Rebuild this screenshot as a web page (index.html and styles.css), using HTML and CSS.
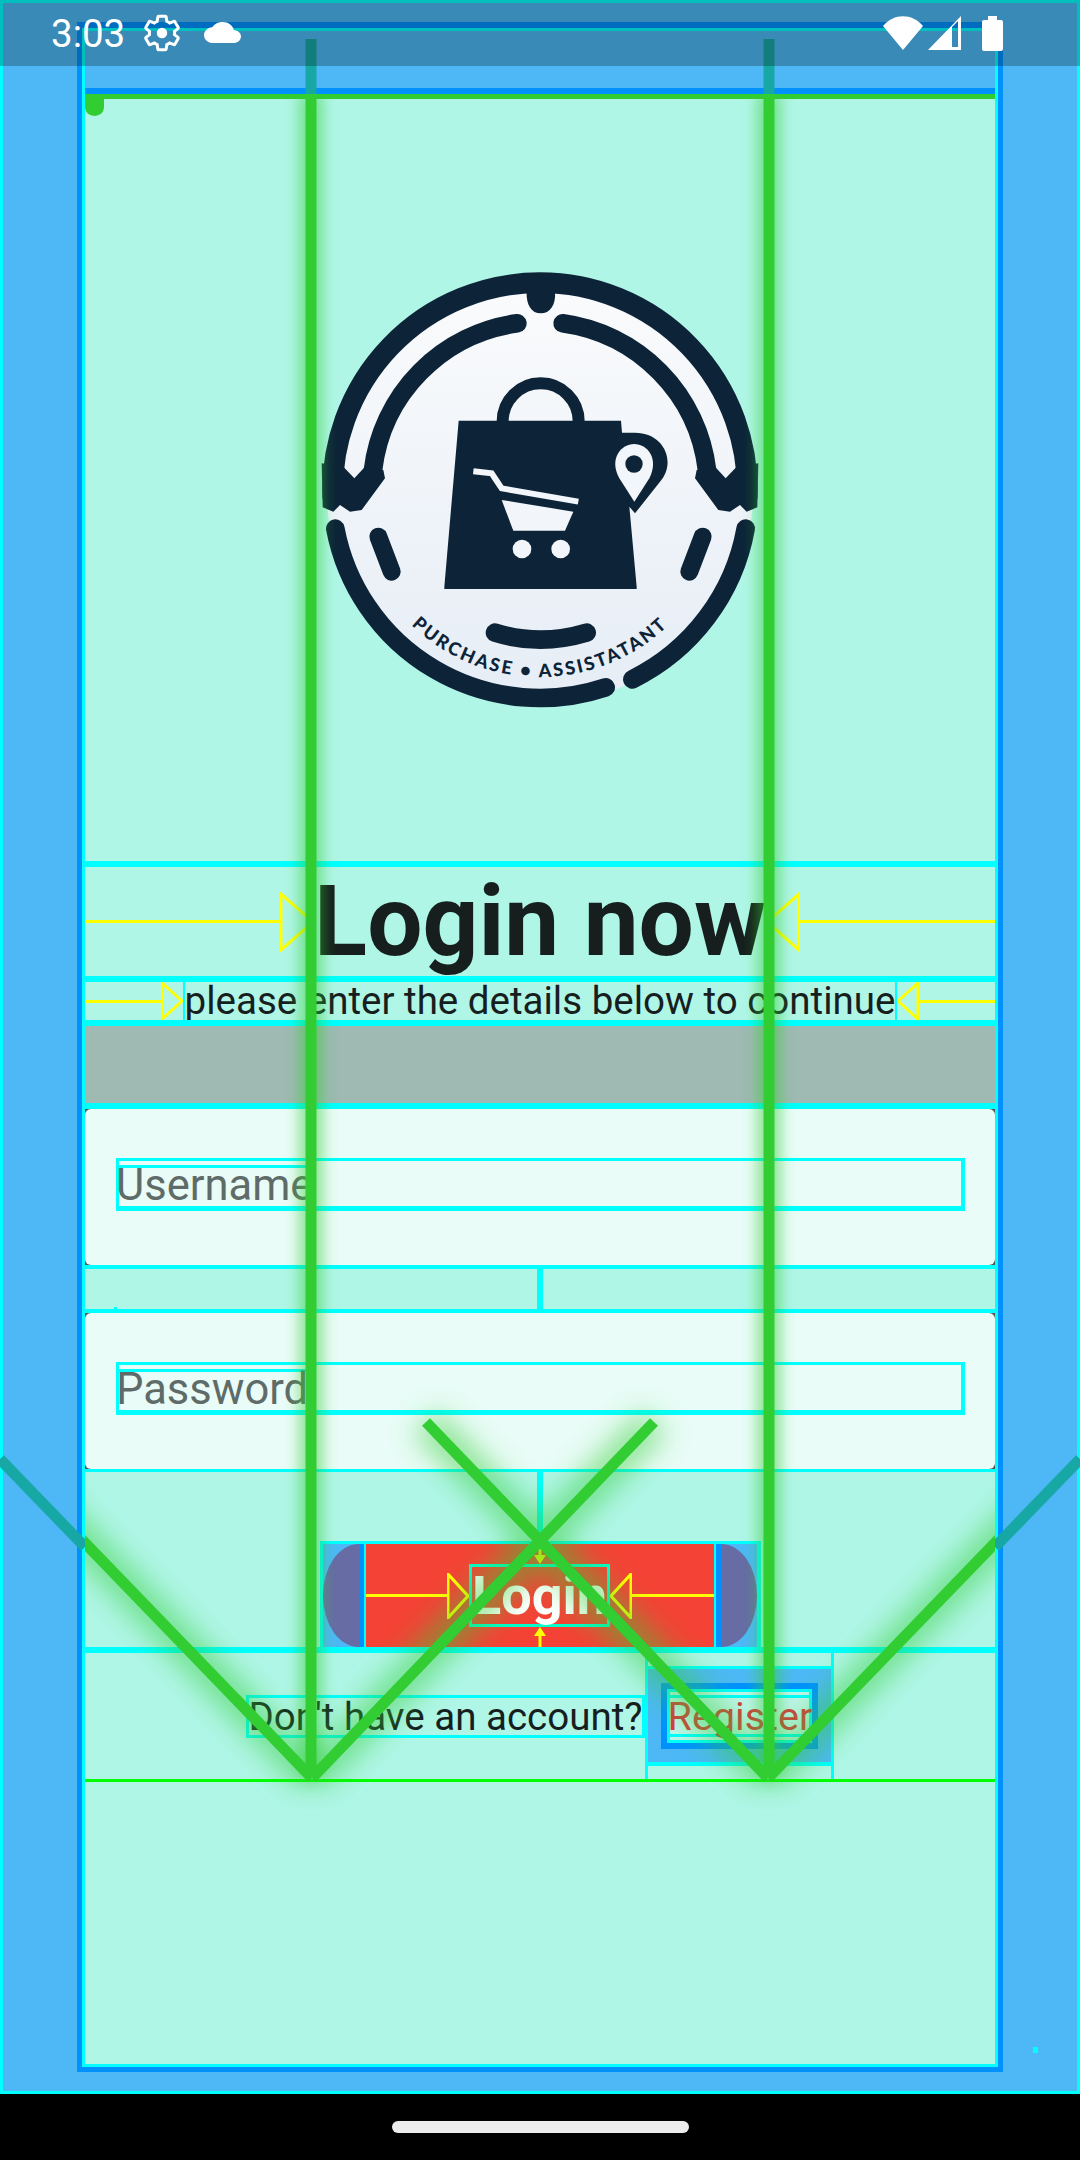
FILE: index.html
```html
<!DOCTYPE html>
<html lang="en">
<head>
    <meta charset="UTF-8">
    <meta name="viewport" content="width=device-width, initial-scale=1.0">
    <title>Login</title>
    <link rel="stylesheet" href="styles.css">
</head>
<body>
<div class="device">
    <div class="app">
        <div class="frame">
            <div class="frame_inner">
                <div class="appbar"></div>
                <div class="panel">
                    <div class="corner_dot"></div>
                    <div class="logo_box">
                        <svg class="logo" viewBox="0 0 1440 1440">
                            <defs>
                                <linearGradient id="disk" x1="0" y1="0" x2="0" y2="1">
                                    <stop offset="0" stop-color="#fafbfc"/>
                                    <stop offset="1" stop-color="#e6edf6"/>
                                </linearGradient>
                            </defs>
                            <circle cx="720" cy="720" r="640" fill="url(#disk)"/>
                            <g class="logo_stroke">
                                <path class="ring_top" d="M98.5 745 A622 622 0 1 1 1341.5 745"/>
                                <path class="arc_inner" d="M652 220 A505 505 0 0 0 219 660"/>
                                <path class="arc_inner" d="M788 220 A505 505 0 0 1 1221 660"/>
                                <path class="arc_low" d="M106 836 A625 625 0 0 0 917 1312"/>
                                <path class="arc_low" d="M997 1288 A628 628 0 0 0 1337 836"/>
                                <path class="tick" d="M235 860 L275 965"/>
                                <path class="tick" d="M1208 860 L1168 965"/>
                                <path class="smile" d="M585 1148 Q720 1190 860 1148"/>
                            </g>
                            <g class="logo_fill">
                                <path d="M680 125 H765 C768 165 750 190 722 190 C695 190 678 165 680 125 Z"/>
                                <path d="M65 640 L130 650 L163 685 L195 650 L250 660 L255 685 L185 780 L150 785 L120 765 L100 785 L68 772 Z"/>
                                <path d="M1375 640 L1310 650 L1277 685 L1245 650 L1190 660 L1185 685 L1255 780 L1290 785 L1320 765 L1340 785 L1372 772 Z"/>
                                <path d="M476 512 H963 L966 548 H1000 C1095 545 1130 640 1080 695 L1005 790 L988 770 L1010 1010 V1017 H433 V1010 Z"/>
                            </g>
                            <path class="logo_handle" d="M608 514 A114 114 0 0 1 836 514"/>
                            <path class="logo_white" d="M1003 755 L958 685 C925 625 965 582 1002 582 C1042 582 1078 625 1048 685 Z"/>
                            <circle class="logo_dark" cx="1002" cy="642" r="26"/>
                            <path class="cart_line" d="M520 664 L575 670 L605 715 L835 755"/>
                            <path class="logo_white" d="M605 750 L820 785 L795 842 H640 Z"/>
                            <circle class="logo_white" cx="666" cy="897" r="28"/>
                            <circle class="logo_white" cx="782" cy="897" r="28"/>
                            <path id="textArc" class="no_paint" d="M165 726 A555 555 0 0 0 1275 726"/>
                            <text class="logo_text"><textPath href="#textArc" startOffset="50%" text-anchor="middle">PURCHASE • ASSISTATANT</textPath></text>
                        </svg>
                    </div>

                    <div class="title_row">
                        <div class="measure"><div class="measure_line"></div><svg class="tri tri_big" viewBox="0 0 34 60"><path d="M1 2 L33 30 L1 58 Z"/></svg></div>
                        <h1 class="title">Login now</h1>
                        <div class="measure"><svg class="tri tri_big" viewBox="0 0 34 60"><path d="M33 2 L1 30 L33 58 Z"/></svg><div class="measure_line"></div></div>
                    </div>

                    <div class="sub_row">
                        <div class="measure"><div class="measure_line"></div><svg class="tri tri_small" viewBox="0 0 22 38"><path d="M1 1 L21 19 L1 37 Z"/></svg></div>
                        <div class="subtitle">please enter the details below to continue</div>
                        <div class="measure"><svg class="tri tri_small" viewBox="0 0 22 38"><path d="M21 1 L1 19 L21 37 Z"/></svg><div class="measure_line"></div></div>
                    </div>

                    <div class="band"></div>

                    <div class="field_wrap">
                        <div class="field">
                            <div class="input"><span class="placeholder">Username</span></div>
                        </div>
                    </div>
                    <div class="gap_row"><div class="gap_tick"></div></div>
                    <div class="field_wrap field_wrap_second">
                        <div class="field">
                            <div class="input"><span class="placeholder">Password</span></div>
                        </div>
                    </div>

                    <div class="button_row">
                        <div class="login_btn">
                            <div class="cap cap_left"></div>
                            <div class="login_body">
                                <svg class="v_arrow" viewBox="0 0 14 20"><path d="M7 0 V12"/><path class="head" d="M1 11 H13 L7 20 Z"/></svg>
                                <div class="login_mid">
                                    <div class="measure"><div class="measure_line"></div><svg class="tri tri_btn" viewBox="0 0 22 46"><path d="M1 1 L21 23 L1 45 Z"/></svg></div>
                                    <div class="login_text">Login</div>
                                    <div class="measure"><svg class="tri tri_btn" viewBox="0 0 22 46"><path d="M21 1 L1 23 L21 45 Z"/></svg><div class="measure_line"></div></div>
                                </div>
                                <svg class="v_arrow" viewBox="0 0 14 20"><path d="M7 8 V20"/><path class="head" d="M1 9 H13 L7 0 Z"/></svg>
                            </div>
                            <div class="cap cap_right"></div>
                        </div>
                    </div>

                    <div class="register_row">
                        <div class="account_text">Don't have an account?</div>
                        <div class="register_slot">
                            <div class="register_btn">
                                <div class="register_inner">
                                    <div class="register_pad">
                                        <div class="register_text">Register</div>
                                    </div>
                                </div>
                            </div>
                        </div>
                    </div>
                </div>
            </div>
        </div>
        <div class="tiny_tick"></div>
    </div>
    <div class="navbar"><div class="nav_pill"></div></div>

    <!-- debug lines lie over everything except the status bar -->
    <svg class="overlay" viewBox="0 0 1080 2160">
        <defs>
            <clipPath id="panelClip"><rect x="85" y="94" width="910" height="1970"/></clipPath>
            <filter id="glow" x="-20%" y="-20%" width="140%" height="140%"><feGaussianBlur stdDeviation="7"/></filter>
            <filter id="glowWide" x="-20%" y="-20%" width="140%" height="140%"><feGaussianBlur stdDeviation="14"/></filter>
        </defs>
        <g class="lines lines_out">
            <path d="M311 39 V94 M769 39 V94 M85 1547 L0 1459 M995 1547 L1080 1459"/>
        </g>
        <g clip-path="url(#panelClip)">
            <g class="lines lines_glow" filter="url(#glow)">
                <path d="M311 94 V1778 M769 94 V1778"/>
            </g>
            <g class="lines lines_glow_wide" filter="url(#glowWide)">
                <path d="M312 1778 L654 1422 M768 1778 L426 1422 M312 1778 L0 1455 M768 1778 L1080 1455"/>
            </g>
            <g class="lines">
                <path d="M311 94 V1778 M769 94 V1778 M312 1778 L654 1422 M768 1778 L426 1422 M312 1778 L0 1455 M768 1778 L1080 1455"/>
            </g>
        </g>
    </svg>

    <div class="statusbar">
        <span class="time">3:03</span>
        <svg class="gear" viewBox="0 0 24 24">
            <path class="gear_outline" d="M19.14 12.94c.04-.3.06-.61.06-.94 0-.32-.02-.64-.07-.94l2.03-1.58c.18-.14.23-.41.12-.61l-1.92-3.32c-.12-.22-.37-.29-.59-.22l-2.39.96c-.5-.38-1.03-.7-1.62-.94l-.36-2.54c-.04-.24-.24-.41-.48-.41h-3.84c-.24 0-.43.17-.47.41l-.36 2.54c-.59.24-1.13.57-1.62.94l-2.39-.96c-.22-.08-.47 0-.59.22L2.74 8.87c-.12.21-.08.47.12.61l2.03 1.58c-.05.3-.09.63-.09.94s.02.64.07.94l-2.03 1.58c-.18.14-.23.41-.12.61l1.92 3.32c.12.22.37.29.59.22l2.39-.96c.5.38 1.03.7 1.62.94l.36 2.54c.05.24.24.41.48.41h3.84c.24 0 .44-.17.47-.41l.36-2.54c.59-.24 1.13-.56 1.62-.94l2.39.96c.22.08.47 0 .59-.22l1.92-3.32c.12-.22.07-.47-.12-.61l-2.01-1.58z"/>
            <circle cx="12" cy="12" r="3" fill="#fff"/>
        </svg>
        <svg class="cloud" viewBox="0 4 24 16" preserveAspectRatio="none">
            <path fill="#fff" d="M19.35 10.04C18.67 6.59 15.64 4 12 4 9.11 4 6.6 5.64 5.35 8.04 2.34 8.36 0 10.91 0 14c0 3.31 2.69 6 6 6h13c2.76 0 5-2.24 5-5 0-2.64-2.05-4.78-4.65-4.96z"/>
        </svg>
        <div class="status_space"></div>
        <svg class="wifi" viewBox="0 0 40 34"><path fill="#fff" d="M20 34 L0 10 C11 -3 29 -3 40 10 Z"/></svg>
        <svg class="signal" viewBox="0 0 34 35"><path fill="#fff" fill-rule="evenodd" d="M0 34 L33 0 V34 Z M24 11 V31 H30 V5 Z"/></svg>
        <svg class="battery" viewBox="0 0 21 35"><path fill="#fff" d="M6 0 H15 V4 H19 Q21 4 21 6 V33 Q21 35 19 35 H2 Q0 35 0 33 V6 Q0 4 2 4 H6 Z"/></svg>
    </div>
</div>
</body>
</html>
```

FILE: styles.css
```css
* { box-sizing: border-box; }
html, body {
    margin: 0;
    padding: 0;
}
body {
    font-family: Roboto, "Liberation Sans", sans-serif;
    color: #161f1e;
}
.device {
    position: relative;
    width: 1080px;
    height: 2160px;
    overflow: hidden;
    display: flex;
    flex-direction: column;
}
.app {
    position: relative;
    height: 2094px;
    padding: 19px 74px 0;
    background: #4db8f5;
    border: 3px solid #0ff;
}
.frame {
    height: 2050px;
    border: solid #0091ff;
    border-width: 6px 5px 5px;
}
.frame_inner {
    height: 100%;
    border: 3px solid #0ff;
    display: flex;
    flex-direction: column;
}
.appbar {
    height: 63px;
    border-bottom: 6px solid #0091ff;
}
.panel {
    position: relative;
    flex: 1;
    background: #b0f6e7;
    border-top: 5px solid #32cd32;
    display: flex;
    flex-direction: column;
}
.corner_dot {
    position: absolute;
    top: 0;
    left: 0;
    width: 19px;
    height: 17px;
    background: #32cd32;
    border-radius: 0 0 50% 50%;
}

/* logo */
.logo_box {
    height: 762px;
    padding-top: 151px;
    display: flex;
    justify-content: center;
}
.logo {
    width: 480px;
    height: 480px;
    display: block;
}
.logo_stroke path {
    fill: none;
    stroke: #0d2438;
    stroke-linecap: round;
}
.logo_stroke .ring_top { stroke-width: 62px; stroke-linecap: butt; }
.logo_stroke .arc_inner { stroke-width: 56px; }
.logo_stroke .arc_low { stroke-width: 56px; }
.logo_stroke .tick { stroke-width: 54px; }
.logo_stroke .smile { stroke-width: 56px; }
.logo_fill path, .logo_dark { fill: #0d2438; }
.logo_handle {
    fill: none;
    stroke: #0d2438;
    stroke-width: 36px;
}
.logo_white { fill: #f2f5f9; }
.cart_line {
    fill: none;
    stroke: #f2f5f9;
    stroke-width: 18px;
}
.no_paint { fill: none; }
.logo_text {
    font-family: Lato, sans-serif;
    font-weight: 900;
    font-size: 55px;
    letter-spacing: 7px;
    fill: #0d2438;
}

/* measure arrows */
.measure {
    flex: 1;
    display: flex;
    align-items: center;
    min-width: 0;
}
.measure_line {
    flex: 1;
    height: 3px;
    background: #ff0;
}
.tri {
    display: block;
    flex: none;
}
.tri path {
    fill: none;
    stroke: #ff0;
    stroke-width: 3;
}
.tri_big { width: 34px; height: 60px; }
.tri_small { width: 22px; height: 38px; }
.tri_btn { width: 22px; height: 46px; }

/* headings */
.title_row {
    height: 115px;
    border-top: 6px solid #0ff;
    display: flex;
    align-items: center;
}
.title {
    margin: 0;
    font-size: 98px;
    font-weight: 700;
    line-height: 109px;
}
.sub_row {
    height: 44px;
    border-top: 6px solid #0ff;
    display: flex;
    align-items: center;
}
.subtitle {
    font-size: 38.5px;
    line-height: 38px;
    border-left: 2px solid #0ff;
    border-right: 2px solid #0ff;
    white-space: nowrap;
}
.band {
    height: 83px;
    border-top: 6px solid #0ff;
    background: #9fb9b3;
    background-clip: padding-box;
}

/* form */
.field_wrap {
    height: 166px;
    padding-top: 6px;
    padding-bottom: 4px;
    background: linear-gradient(#0ff 6px, #555 6px, #555 162px, #0ff 162px);
}
.field_wrap_second {
    height: 163px;
    padding-top: 4px;
    padding-bottom: 3px;
    background: linear-gradient(#0ff 4px, #555 4px, #555 160px, #0ff 160px);
}
.field {
    height: 156px;
    padding: 49px 30px 0 31px;
    background: #e9fcf7;
    border-radius: 6px;
}
.input {
    height: 53px;
    border: solid #0ff;
    border-width: 3px 4px 5px 3px;
    padding-top: 4px;
    display: flex;
    align-items: flex-start;
}
.placeholder {
    display: block;
    height: 38px;
    margin-left: -3px;
    border-top: 3px solid #0ff;
    font-size: 43.5px;
    line-height: 36px;
    color: #5f6b68;
    white-space: nowrap;
}
.gap_row {
    position: relative;
    height: 40px;
    background: linear-gradient(#0ff, #0ff) center / 6px 100% no-repeat;
}
.gap_tick {
    position: absolute;
    left: 29px;
    bottom: 0;
    width: 3px;
    height: 2px;
    background: #0ff;
}

/* login button */
.button_row {
    height: 175px;
    padding-top: 69px;
    display: flex;
    justify-content: center;
    background: linear-gradient(#0ff, #0ff) center top / 6px 69px no-repeat;
}
.login_btn {
    width: 441px;
    height: 106px;
    background: #4db8f5;
    border: solid #0ff;
    border-width: 3px 4px 0 3px;
    display: flex;
}
.cap {
    width: 41px;
    flex: none;
    background: #676ca5;
    border-right: 5px solid #0091ff;
}
.cap_left { border-radius: 36px 0 0 36px / 52px 0 0 52px; }
.cap_right {
    border-right: 0;
    border-left: 5px solid #0091ff;
    border-radius: 0 36px 36px 0 / 0 52px 52px 0;
}
.login_body {
    flex: 1;
    background: #f44336;
    border-left: 2px solid #0ff;
    border-right: 2px solid #0ff;
    display: flex;
    flex-direction: column;
    align-items: center;
}
.v_arrow {
    display: block;
    width: 14px;
    height: 20px;
    flex: none;
}
.v_arrow path {
    fill: none;
    stroke: #ff0;
    stroke-width: 3;
}
.v_arrow .head { fill: #ff0; stroke: none; }
.login_mid {
    width: 100%;
    height: 63px;
    display: flex;
    align-items: center;
}
.login_text {
    height: 63px;
    border: 3px solid #0fc;
    font-size: 54px;
    font-weight: 700;
    line-height: 57px;
    color: #fff;
}

/* register */
.register_row {
    height: 135px;
    border-top: 6px solid #0ff;
    border-bottom: 3px solid #0f0;
    display: flex;
    justify-content: center;
    align-items: center;
}
.account_text {
    font-size: 38.5px;
    line-height: 37px;
    border: 3px solid #0ff;
    white-space: nowrap;
}
.register_slot {
    width: 189px;
    height: 100%;
    border-left: 3px solid #0ff;
    border-right: 3px solid #0ff;
    display: flex;
    align-items: center;
}
.register_btn {
    height: 100px;
    margin: 0 -3px;
    flex: none;
    width: 189px;
    background: #4db8f5;
    border: 3px solid #0ff;
    border-bottom-width: 4px;
    display: flex;
    align-items: center;
    justify-content: center;
}
.register_inner {
    width: 157px;
    height: 66px;
    border: 6px solid #0091ff;
}
.register_pad {
    height: 100%;
    padding: 3px 0;
    background: #c2f5ec;
    border: 3px solid #0ff;
    display: flex;
    justify-content: center;
}
.register_text {
    height: 100%;
    font-size: 39.5px;
    line-height: 37px;
    color: #d6383c;
    border-top: 3px solid #0ff;
    border-bottom: 3px solid #0ff;
    white-space: nowrap;
}
.tiny_tick {
    position: absolute;
    left: 1030px;
    top: 2044px;
    width: 5px;
    height: 6px;
    background: #0ff;
}

/* navigation */
.navbar {
    flex: 1;
    background: #000;
    display: flex;
    justify-content: center;
    padding-top: 27px;
}
.nav_pill {
    width: 297px;
    height: 12px;
    background: #ececec;
    border-radius: 6px;
}

/* overlay lines */
.overlay {
    position: absolute;
    top: 0;
    left: 0;
    width: 1080px;
    height: 2160px;
    pointer-events: none;
}
.lines path {
    fill: none;
    stroke: #32cd32;
    stroke-width: 11px;
}
.lines_out path {
    stroke: #17a8a6;
}
.lines_glow {
    opacity: 0.5;
}
.lines_glow path {
    stroke-width: 24px;
}
.lines_glow_wide {
    opacity: 0.5;
}
.lines_glow_wide path {
    stroke-width: 34px;
}

/* status bar */
.statusbar {
    position: absolute;
    top: 0;
    left: 0;
    width: 1080px;
    height: 66px;
    background: rgba(0, 0, 0, 0.25);
    padding: 0 77px 0 51px;
    display: flex;
    align-items: center;
    color: #fff;
}
.time {
    font-size: 38.5px;
    width: 90px;
}
.gear {
    width: 42px;
    height: 42px;
}
.gear_outline {
    fill: none;
    stroke: #fff;
    stroke-width: 1.7;
}
.cloud {
    width: 37px;
    height: 21px;
    margin-left: 21px;
    margin-top: -2px;
}
.status_space { flex: 1; }
.wifi { width: 40px; height: 34px; }
.signal { width: 34px; height: 35px; margin-left: 5px; }
.battery { width: 21px; height: 35px; margin-left: 20px; }
```
